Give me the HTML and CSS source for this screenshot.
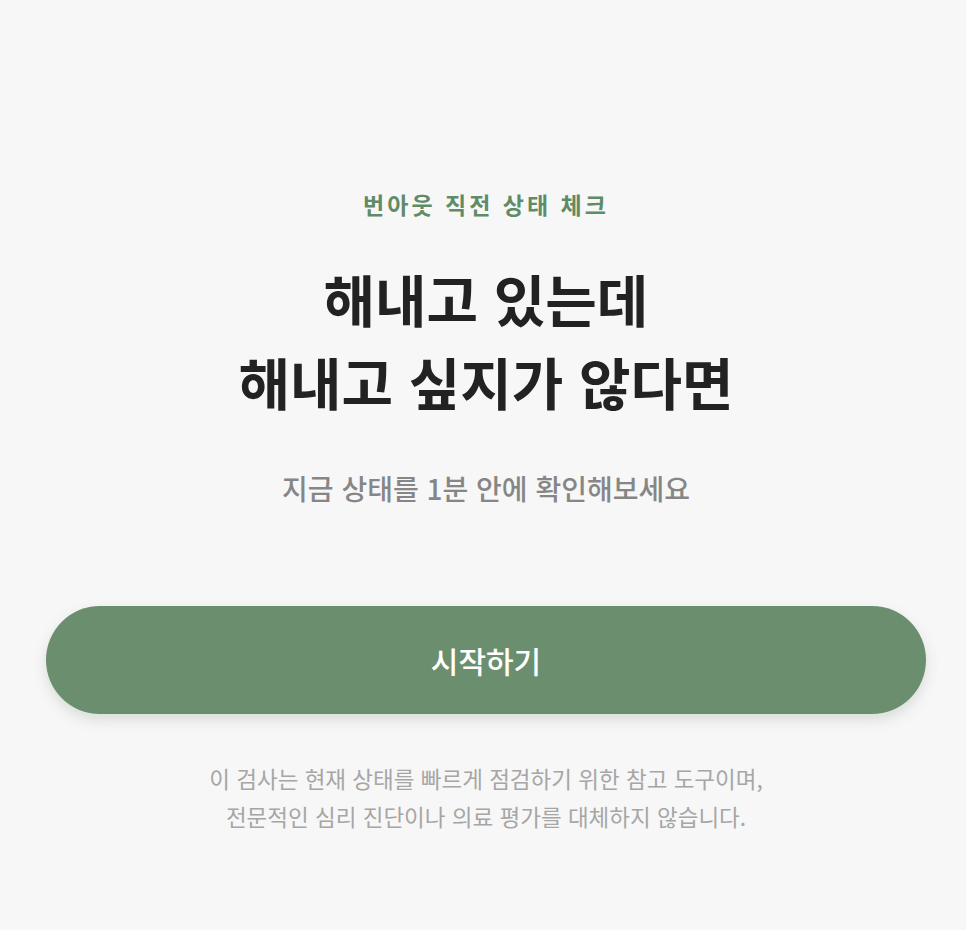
FILE: index.html
```html
<!DOCTYPE html>
<html lang="ko">
<head>
    <meta charset="UTF-8">
    <meta name="viewport" content="width=device-width, initial-scale=1.0">
    <title>번아웃 직전 상태 체크</title>
    <link rel="stylesheet" href="styles.css">
</head>
<body>
    <main class="intro">
        <p class="eyebrow">번아웃 직전 상태 체크</p>

        <h1 class="headline">해내고 있는데<br>해내고 싶지가 않다면</h1>

        <p class="subtitle">지금 상태를 1분 안에 확인해보세요</p>

        <button type="button" class="btn-start">시작하기</button>

        <p class="notice">
            이 검사는 현재 상태를 빠르게 점검하기 위한 참고 도구이며,<br>
            전문적인 심리 진단이나 의료 평가를 대체하지 않습니다.
        </p>
    </main>
</body>
</html>
```

FILE: styles.css
```css
* {
    margin: 0;
    padding: 0;
    box-sizing: border-box;
}

body {
    font-family: "Noto Sans CJK KR", "Noto Sans", sans-serif;
    background: #f7f7f7;
    min-height: 100vh;
}

.intro {
    display: flex;
    flex-direction: column;
    align-items: center;
    text-align: center;
    padding: 189px 40px 0 46px;
}

.eyebrow {
    color: #5f8b66;
    font-size: 23px;
    font-weight: 700;
    line-height: 31px;
    letter-spacing: 3px;
}

.headline {
    margin-top: 36px;
    color: #222;
    font-size: 56px;
    font-weight: 700;
    line-height: 83px;
}

.subtitle {
    margin-top: 48px;
    color: #868686;
    font-size: 28px;
    font-weight: 500;
    line-height: 36px;
}

.btn-start {
    margin-top: 100px;
    width: 880px;
    height: 108px;
    border: none;
    border-radius: 54px;
    background: #6b8f6e;
    color: #fff;
    font-family: inherit;
    font-size: 30px;
    font-weight: 500;
    box-shadow: 0 6px 14px rgba(60, 90, 64, 0.16);
    cursor: pointer;
}

.notice {
    margin-top: 45px;
    color: #a6a6a6;
    font-size: 22.5px;
    font-weight: 400;
    line-height: 38px;
}
```
